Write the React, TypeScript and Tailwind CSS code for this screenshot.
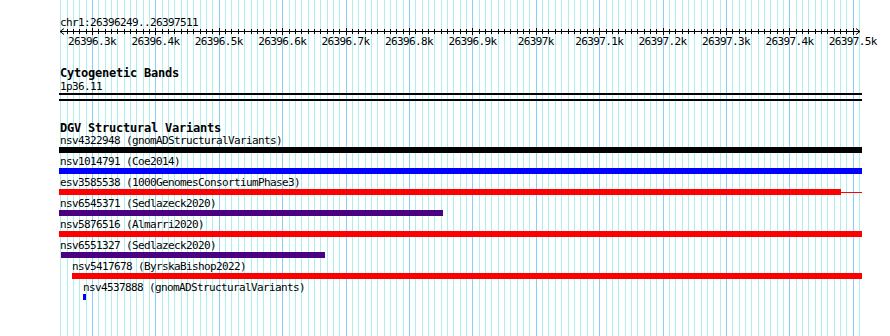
import React from "react";

const MONO = '"DejaVu Sans Mono", "Liberation Mono", monospace';

const ticks: number[] = [];
for (let k = -5; k <= 121; k++) ticks.push(k);
const xOf = (k: number) => Math.round(92 + k * 6.34) + 0.5;

const labels = [
  "26396.3k",
  "26396.4k",
  "26396.5k",
  "26396.6k",
  "26396.7k",
  "26396.8k",
  "26396.9k",
  "26397k",
  "26397.1k",
  "26397.2k",
  "26397.3k",
  "26397.4k",
  "26397.5k",
];

type Row = {
  label: string;
  labelX: number;
  left: number;
  right: number;
  color: string;
  tail?: number;
};

const rows: Row[] = [
  { label: "nsv4322948 (gnomADStructuralVariants)", labelX: 60, left: 59, right: 862, color: "#000000" },
  { label: "nsv1014791 (Coe2014)", labelX: 60, left: 59, right: 862, color: "#0000ff" },
  { label: "esv3585538 (1000GenomesConsortiumPhase3)", labelX: 60, left: 59, right: 841, color: "#ff0000", tail: 862 },
  { label: "nsv6545371 (Sedlazeck2020)", labelX: 60, left: 59, right: 443, color: "#4b0082" },
  { label: "nsv5876516 (Almarri2020)", labelX: 60, left: 59, right: 862, color: "#ff0000" },
  { label: "nsv6551327 (Sedlazeck2020)", labelX: 60, left: 61, right: 325, color: "#4b0082" },
  { label: "nsv5417678 (ByrskaBishop2022)", labelX: 72, left: 72, right: 862, color: "#ff0000" },
  { label: "nsv4537888 (gnomADStructuralVariants)", labelX: 83, left: 83, right: 86, color: "#0000ff" },
];

export default function App() {
  return (
    <div className="relative w-[890px] h-[336px] overflow-hidden bg-white text-black">
      {/* grid */}
      <svg className="absolute inset-0" width={890} height={336}>
        {ticks.map((k) => (
          <line
            key={k}
            x1={xOf(k)}
            x2={xOf(k)}
            y1={0}
            y2={336}
            stroke={k % 10 === 0 ? "#87cefa" : "#afeeee"}
            strokeWidth={1}
          />
        ))}
      </svg>

      <div className="relative flex flex-col" style={{ fontFamily: MONO }}>
        <div className="pl-[60px] pt-[16px] text-[11px] leading-[13px] tracking-[-0.62px]">
          chr1:26396249..26397511
        </div>

        {/* axis */}
        <svg width={890} height={21} className="block -mt-[2px]">
          <line x1={60} x2={860} y1={4.5} y2={4.5} stroke="#000" strokeWidth={1} />
          <polyline points="64,1.5 60,4.5 64,7.5" fill="none" stroke="#000" strokeWidth={1} />
          <polyline points="856,1.5 860,4.5 856,7.5" fill="none" stroke="#000" strokeWidth={1} />
          {ticks
            .filter((k) => xOf(k) > 62 && xOf(k) < 858)
            .map((k) => (
              <line
                key={k}
                x1={xOf(k)}
                x2={xOf(k)}
                y1={k % 10 === 0 ? 1 : 2}
                y2={k % 10 === 0 ? 8 : 7}
                stroke="#000"
                strokeWidth={1}
              />
            ))}
          {labels.map((t, i) => (
            <text
              key={t}
              x={92 + i * 63.4}
              y={18}
              textAnchor="middle"
              fontSize={11}
              letterSpacing={-0.62}
              fontFamily={MONO}
              fill="#000"
            >
              {t}
            </text>
          ))}
        </svg>

        <div className="pl-[60px] mt-[19px] text-[12px] leading-[13px] font-bold tracking-[-0.22px]">
          Cytogenetic Bands
        </div>
        <div className="pl-[60px] text-[11px] leading-[13px] tracking-[-0.62px]">1p36.11</div>
        <div className="ml-[59px] w-[803px] h-[2px] bg-black" />
        <div className="ml-[59px] mt-[4px] w-[803px] h-[2px] bg-black" />

        <div className="pl-[60px] mt-[22px] text-[12px] leading-[11px] font-bold tracking-[-0.22px]">
          DGV Structural Variants
        </div>

        <div className="flex flex-col">
          {rows.map((r) => (
            <div key={r.label} className="flex flex-col mb-[2px]">
              <div
                className="text-[11px] leading-[13px] tracking-[-0.62px] whitespace-pre"
                style={{ paddingLeft: r.labelX }}
              >
                {r.label}
              </div>
              <div className="flex h-[6px] items-start">
                <div
                  className="h-[6px]"
                  style={{ marginLeft: r.left, width: r.right - r.left, background: r.color }}
                />
                {r.tail ? (
                  <div
                    className="h-[1px] mt-[2.5px]"
                    style={{ width: r.tail - r.right, background: r.color }}
                  />
                ) : null}
              </div>
            </div>
          ))}
        </div>
      </div>
    </div>
  );
}
